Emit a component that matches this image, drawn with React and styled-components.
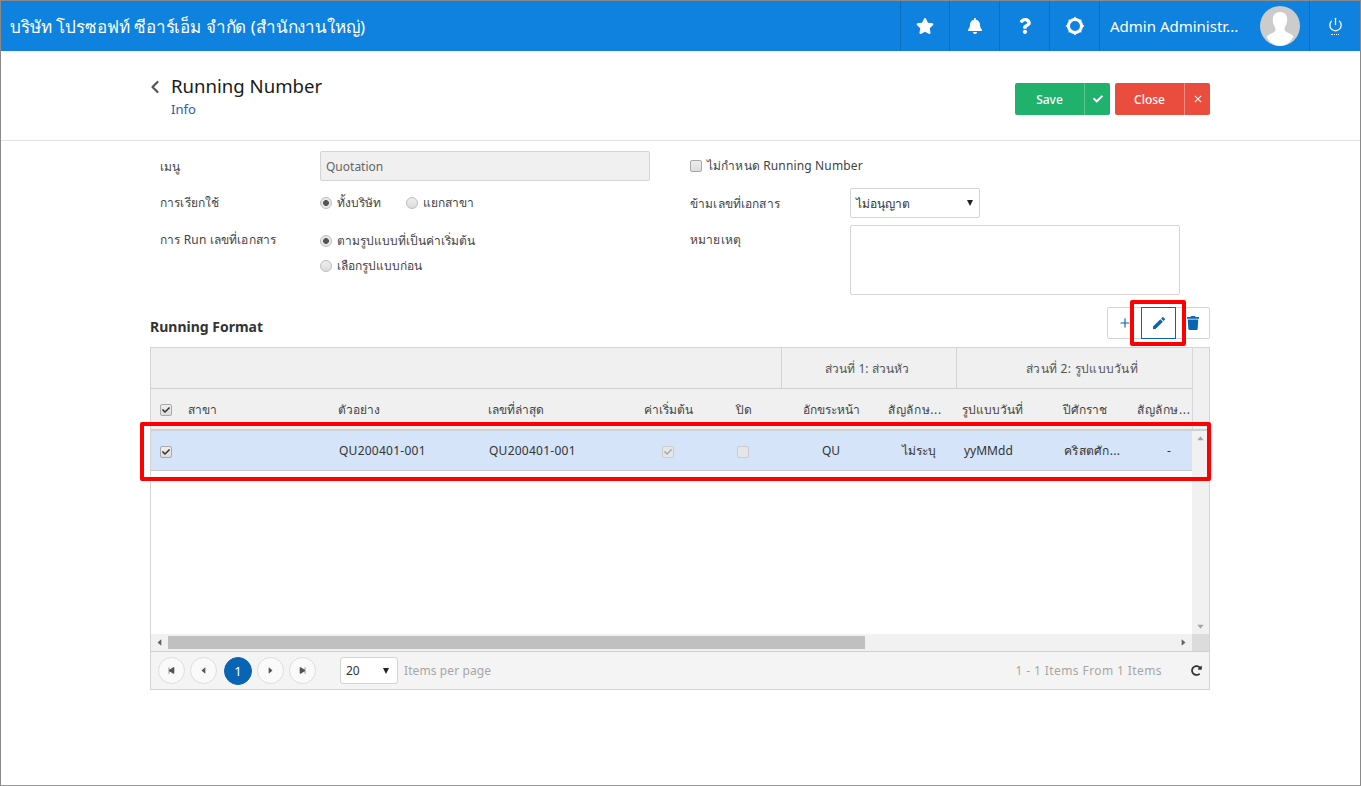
import React from "react";
import styled, { createGlobalStyle } from "styled-components";
import { FaStar, FaBell, FaQuestion, FaCheck, FaTrash, FaRedoAlt } from "react-icons/fa";
import { MdEdit, MdClose } from "react-icons/md";
import { FiPower, FiChevronLeft, FiPlus } from "react-icons/fi";
import { IoPlaySkipBack, IoPlaySkipForward, IoCaretBack, IoCaretForward, IoCaretUp, IoCaretDown } from "react-icons/io5";

const GlobalStyle = createGlobalStyle`
  html, body { margin: 0; padding: 0; background: #fff; }
  body {
    font-family: Tahoma, "Noto Sans", "DejaVu Sans", sans-serif;
    font-size: 12px;
    color: #333;
  }
  * { box-sizing: border-box; }
`;

const Page = styled.div`
  width: 1361px;
  height: 786px;
  border: 1px solid #8a8a8a;
  border-bottom: 1px solid #9a9a9a;
  overflow: hidden;
  position: relative;
`;
const TopBar = styled.header`
  height: 50px;
  background: #0e82de;
  color: #fff;
  display: flex;
  align-items: center;
`;
const Company = styled.div`
  flex: 1;
  padding-left: 9px;
  font-size: 17px;
  letter-spacing: -0.08px;
`;
const TopCell = styled.div`
  width: ${(p) => p.$w || 50}px;
  height: 50px;
  border-left: 1px solid #0b6fc0;
  display: flex;
  align-items: center;
  justify-content: center;
  font-size: ${(p) => p.$size || 18}px;
`;
const UserCell = styled.div`
  width: 210px;
  height: 50px;
  border-left: 1px solid #0b6fc0;
  display: flex;
  align-items: center;
  justify-content: space-between;
  padding: 0 9px 0 10px;
  font-size: 15px;
`;
const Avatar = styled.svg`
  width: 40px;
  height: 40px;
  border-radius: 50%;
  background: #ccc;
`;
const PowerWrap = styled.div`
  display: flex;
  flex-direction: column;
  align-items: center;
  line-height: 0;
`;
const PowerDots = styled.span`
  width: 8px;
  height: 1px;
  margin-top: 2px;
  border-top: 1px dotted #fff;
`;
const TitleBar = styled.div`
  height: 90px;
  border-bottom: 1px solid #e2e2e2;
  padding: 0 150px 0 149px;
  display: flex;
  justify-content: space-between;
`;
const TitleLeft = styled.div`
  display: flex;
  padding-top: 21px;
`;
const BackIcon = styled(FiChevronLeft)`
  flex: none;
  width: 20px;
  height: 20px;
  color: #555;
  stroke-width: 2.6;
  margin: 5px 6px 0 -5px;
`;
const TitleText = styled.div`
  font-size: 18.6px;
  line-height: 28px;
  color: #1a1a1a;
`;
const SubTitle = styled.div`
  font-size: 13px;
  line-height: 16px;
  margin-top: 1px;
  color: #2b5cb0;
`;
const Actions = styled.div`
  display: flex;
  gap: 5px;
  padding-top: 32px;
`;
const ActionBtn = styled.div`
  height: 32px;
  display: flex;
  color: #fff;
  border-radius: 2px;
  background: ${(p) => p.$bg};
  font-size: 12px;
  font-weight: 500;
`;
const ActionLabel = styled.span`
  width: 69px;
  display: flex;
  align-items: center;
  justify-content: center;
`;
const ActionIcon = styled.span`
  width: 26px;
  display: flex;
  align-items: center;
  justify-content: center;
  font-size: 10px;
  border-left: 1px solid ${(p) => p.$line};
`;
const Content = styled.div`
  width: 1060px;
  margin-left: 149px;
`;
const FormGrid = styled.div`
  display: grid;
  grid-template-columns: 526px 1fr;
  height: 166px;
`;
const FormCol = styled.div`
  display: flex;
  flex-direction: column;
`;
const Row = styled.div`
  display: flex;
  align-items: ${(p) => p.$top ? "flex-start" : "center"};
  margin-top: ${(p) => p.$mt || 0}px;
  padding-left: ${(p) => p.$pl || 0}px;
`;
const Label = styled.div`
  width: ${(p) => p.$w}px;
  flex: none;
  color: #444;
  line-height: 13px;
  letter-spacing: 0.15px;
  padding-top: ${(p) => p.$pt || 0}px;
`;
const CheckLabel = styled(Label)`
  margin-left: 5px;
`;
const ReadInput = styled.div`
  width: 330px;
  height: 30px;
  background: #f0f0f0;
  border: 1px solid #d4d4d4;
  border-radius: 2px;
  padding: 0 5px;
  display: flex;
  align-items: center;
  color: #666;
`;
const RadioGroup = styled.div`
  display: flex;
  flex-direction: column;
  gap: 10px;
`;
const RadioLine = styled.div`
  display: flex;
  align-items: center;
  gap: ${(p) => p.$gap || 0}px;
  height: 15px;
`;
const Radio = styled.label`
  display: flex;
  align-items: center;
  gap: 5px;
  color: #444;
`;
const RadioDot = styled.span`
  width: 12px;
  height: 12px;
  border-radius: 50%;
  border: 1px solid #bdbdbd;
  background: ${(p) => p.$on ? "radial-gradient(circle, #555 0 2.6px, #e8e8e8 3.2px)" : "linear-gradient(#eee, #dcdcdc)"};
`;
const Box = styled.span`
  width: 12px;
  height: 12px;
  flex: none;
  margin-left: ${(p) => p.$ml || 0}px;
  border-radius: 2px;
  border: 1px solid ${(p) => p.$faded ? "#ccc" : "#a9a9a9"};
  background: ${(p) => p.$faded ? "#e4e6ea" : "linear-gradient(#eee, #ddd)"};
  color: ${(p) => p.$faded ? "#a9a9a9" : "#333"};
  font-size: 8px;
  display: inline-flex;
  align-items: center;
  justify-content: center;
  vertical-align: middle;
`;
const Select = styled.div`
  width: 130px;
  height: 30px;
  border: 1px solid #d4d4d4;
  border-radius: 2px;
  padding: 0 5px;
  display: flex;
  align-items: center;
  justify-content: space-between;
  color: #333;
  font-weight: 500;
`;
const Arrow = styled.span`
  width: 0;
  height: 0;
  margin-right: 1px;
  border-left: 3.5px solid transparent;
  border-right: 3.5px solid transparent;
  border-top: 6px solid #222;
`;
const SizeArrow = styled(Arrow)`
  margin-right: 3px;
`;
const TextArea = styled.div`
  width: 330px;
  height: 70px;
  border: 1px solid #d4d4d4;
  border-radius: 2px;
`;
const FormatBar = styled.div`
  height: 40px;
  display: flex;
  align-items: flex-start;
  justify-content: space-between;
`;
const FormatTitle = styled.div`
  font-size: 14px;
  line-height: 40px;
  font-weight: 700;
  color: #333;
`;
const ToolGroup = styled.div`
  display: flex;
  width: 103px;
  height: 32px;
  border: 1px solid #d4d4d4;
  border-radius: 2px;
  color: #0a64b4;
`;
const ToolBtn = styled.div`
  flex: ${(p) => p.$w ? `0 0 ${p.$w}px` : 1};
  display: flex;
  align-items: center;
  justify-content: center;
  font-size: ${(p) => p.$size || 14}px;
  ${(p) => p.$active && "border: 1px solid #0a64b4; height: 32px; margin-top: -1px;"}
`;
const Grid = styled.div`
  width: 1060px;
  height: 343px;
  border: 1px solid #d4d4d4;
  display: flex;
  flex-direction: column;
`;
const HeadWrap = styled.div`
  display: flex;
  flex: none;
  height: 83px;
  background: #f0f0f0;
  border-bottom: 2px solid #d0d0d0;
`;
const HeadMain = styled.div`
  width: 1041px;
  overflow: hidden;
`;
const HeadGap = styled.div`
  flex: 1;
  border-left: 1px solid #d8d8d8;
`;
const GroupRow = styled.div`
  height: 41px;
  display: flex;
  border-bottom: 1px solid #d0d0d0;
`;
const GroupCell = styled.div`
  width: ${(p) => p.$w}px;
  flex: none;
  display: flex;
  align-items: center;
  justify-content: center;
  color: #555;
  padding: 0 ${(p) => p.$pr || 0}px 0 ${(p) => p.$pl || 0}px;
  letter-spacing: ${(p) => p.$ls || 0}px;
  ${(p) => p.$line && "border-left: 1px solid #d4d4d4;"}
`;
const Cols = styled.div`
  display: flex;
  height: ${(p) => p.$h}px;
  align-items: center;
`;
const Col = styled.div`
  width: ${(p) => p.$w}px;
  flex: none;
  padding: ${(p) => p.$pad || "0"};
  text-align: ${(p) => p.$align || "left"};
  white-space: nowrap;
  overflow: hidden;
  letter-spacing: ${(p) => p.$ls || 0}px;
  color: ${(p) => p.$color || "#333"};
`;
const BodyWrap = styled.div`
  height: 203px;
  flex: none;
  display: flex;
`;
const BodyMain = styled.div`
  width: 1041px;
`;
const DataRow = styled.div`
  background: #d5e4f9;
  border-bottom: 1px solid #c8c8c8;
`;
const VScroll = styled.div`
  flex: 1;
  background: #f1f1f1;
  display: flex;
  flex-direction: column;
  justify-content: space-between;
  align-items: center;
  color: #a3a3a3;
  font-size: 9px;
  padding: 3px 0;
`;
const HScroll = styled.div`
  height: 18px;
  flex: none;
  display: flex;
  align-items: center;
  background: #f1f1f1;
  border-bottom: 1px solid #d0d0d0;
  color: #666;
  font-size: 9px;
`;
const HArrow = styled.span`
  width: 17px;
  display: flex;
  justify-content: center;
`;
const HThumb = styled.div`
  width: 697px;
  height: 13px;
  background: #c0c0c0;
`;
const HRest = styled.div`
  flex: 1;
`;
const Corner = styled.div`
  width: 17px;
  height: 17px;
  background: #dcdcdc;
`;
const Footer = styled.div`
  flex: 1;
  background: #f4f4f4;
  display: flex;
  align-items: center;
  padding: 0 7px;
  gap: 5px;
`;
const Pager = styled.span`
  width: 27px;
  height: 27px;
  border-radius: 50%;
  display: flex;
  align-items: center;
  justify-content: center;
  font-size: 9px;
  border: 1px solid #ddd;
  background: #fafafa;
  color: #555;
`;
const ActivePager = styled(Pager)`
  width: 28px;
  height: 28px;
  margin-left: 2px;
  font-size: 13px;
  border-color: #0a64b4;
  background: #0a64b4;
  color: #fff;
`;
const PageSize = styled.div`
  width: 58px;
  height: 27px;
  margin-left: 19px;
  margin-right: 1px;
  background: #fff;
  border: 1px solid #d4d4d4;
  border-radius: 3px;
  padding: 0 5px;
  display: flex;
  align-items: center;
  justify-content: space-between;
`;
const FootText = styled.span`
  color: #a6a6a6;
  letter-spacing: ${(p) => p.$ls || 0}px;
`;
const FootRight = styled.div`
  margin-left: auto;
  display: flex;
  align-items: center;
  gap: 29px;
`;
const Refresh = styled(FaRedoAlt)`
  font-size: 11px;
  color: #333;
`;
const Mark = styled.div`
  position: absolute;
  left: ${(p) => p.$x}px;
  top: ${(p) => p.$y}px;
  width: ${(p) => p.$w}px;
  height: ${(p) => p.$h}px;
  border: 4px solid #f00;
  border-radius: 2px;
`;

const columns = [
  { w: 30 },
  { w: 150, pad: "0 0 0 7px", head: "สาขา" },
  { w: 150, pad: "0 0 0 7px", head: "ตัวอย่าง", cell: "QU200401-001", cellPad: "0 0 0 8px", cellLs: 0.25 },
  { w: 150, pad: "0 0 0 7px", head: "เลขที่ล่าสุด", cell: "QU200401-001", cellPad: "0 0 0 8px", cellLs: 0.25 },
  { w: 75, align: "center", head: "ค่าเริ่มต้น" },
  { w: 75, align: "center", head: "ปิด" },
  { w: 100, align: "center", head: "อักขระหน้า", cell: "QU" },
  { w: 75, align: "center", pad: "0 7px 0 0", head: "สัญลักษ...", headLs: 0.6, cell: "ไม่ระบุ", cellPad: "0" },
  { w: 100, pad: "0 0 0 6px", head: "รูปแบบวันที่", cell: "yyMMdd", cellPad: "0 0 0 8px" },
  { w: 75, pad: "0 0 0 7px", head: "ปีศักราช", cell: "คริสตศัก...", cellPad: "0 0 0 8px", cellLs: 0.3 },
  { w: 61, pad: "0 0 0 6px", head: "สัญลักษ...", headLs: 0.6, cell: "-", cellPad: "0 0 0 36px" },
];

const Gear = () => (
  <svg width="20" height="20" viewBox="0 0 20 20">
    <circle cx="10" cy="10" r="6.5" fill="none" stroke="#fff" strokeWidth="3" />
    <path fill="#fff" d="M10 .6l2 2.400H8zM10 19.400l2-2.400H8zM.6 10l2.400-2v4zM19.400 10l-2.400-2v4zM3.400 3.400l3 .7-2.300 2.300zM16.600 3.400l-3 .7 2.300 2.300zM3.400 16.600l3-.7-2.300-2.300zM16.600 16.600l-3-.7 2.300-2.300z" />
  </svg>
);

const App = () => {
  return (
    <>
      <GlobalStyle />
      <Page>
        <TopBar>
          <Company>บริษัท โปรซอฟท์ ซีอาร์เอ็ม จำกัด (สำนักงานใหญ่)</Company>
          <TopCell $w={49}><FaStar /></TopCell>
          <TopCell><FaBell size={16} /></TopCell>
          <TopCell><FaQuestion size={16} /></TopCell>
          <TopCell><Gear /></TopCell>
          <UserCell>
            <span>Admin Administr...</span>
            <Avatar viewBox="0 0 40 40">
              <path fill="#fff" d="M20 6c-5 0-7.500 3.500-7.200 8.500.2 3 1 5 2 6.500.8 1.300.9 3 .2 4.200-1.500 2-6.500 3-8.500 5.500C8.500 34.500 13 40 20 40s11.500-5.500 13.500-9.800c-2-2.500-7-3.500-8.500-5.500-.7-1.200-.6-2.900.2-4.200 1-1.500 1.800-3.500 2-6.500C27.500 9.500 25 6 20 6z" />
            </Avatar>
          </UserCell>
          <TopCell $w={51}>
            <PowerWrap>
              <FiPower size={15} />
              <PowerDots />
            </PowerWrap>
          </TopCell>
        </TopBar>

        <TitleBar>
          <TitleLeft>
            <BackIcon />
            <div>
              <TitleText>Running Number</TitleText>
              <SubTitle>Info</SubTitle>
            </div>
          </TitleLeft>
          <Actions>
            <ActionBtn $bg="#20b16c">
              <ActionLabel>Save</ActionLabel>
              <ActionIcon $line="#5cc893"><FaCheck /></ActionIcon>
            </ActionBtn>
            <ActionBtn $bg="#ea4c3e">
              <ActionLabel>Close</ActionLabel>
              <ActionIcon $line="#f08a80"><MdClose size={12} /></ActionIcon>
            </ActionBtn>
          </Actions>
        </TitleBar>

        <Content>
          <FormGrid>
            <FormCol>
              <Row $pl={10} $mt={10}>
                <Label $w={160}>เมนู</Label>
                <ReadInput>Quotation</ReadInput>
              </Row>
              <Row $pl={10} $mt={14}>
                <Label $w={160}>การเรียกใช้</Label>
                <RadioLine $gap={25}>
                  <Radio><RadioDot $on />ทั้งบริษัท</Radio>
                  <Radio><RadioDot />แยกสาขา</Radio>
                </RadioLine>
              </Row>
              <Row $pl={10} $mt={23} $top>
                <Label $w={160}>การ Run เลขที่เอกสาร</Label>
                <RadioGroup>
                  <RadioLine><Radio><RadioDot $on />ตามรูปแบบที่เป็นค่าเริ่มต้น</Radio></RadioLine>
                  <RadioLine><Radio><RadioDot />เลือกรูปแบบก่อน</Radio></RadioLine>
                </RadioGroup>
              </Row>
            </FormCol>
            <FormCol>
              <Row $mt={18} $pl={14}>
                <Box />
                <CheckLabel $w={300}>ไม่กำหนด Running Number</CheckLabel>
              </Row>
              <Row $mt={16} $pl={14}>
                <Label $w={160}>ข้ามเลขที่เอกสาร</Label>
                <Select>ไม่อนุญาต<Arrow /></Select>
              </Row>
              <Row $mt={7} $pl={14} $top>
                <Label $w={160} $pt={8}>หมายเหตุ</Label>
                <TextArea />
              </Row>
            </FormCol>
          </FormGrid>

          <FormatBar>
            <FormatTitle>Running Format</FormatTitle>
            <ToolGroup>
              <ToolBtn $w={33} $size={14}><FiPlus /></ToolBtn>
              <ToolBtn $w={35} $active $size={16}><MdEdit /></ToolBtn>
              <ToolBtn><FaTrash /></ToolBtn>
            </ToolGroup>
          </FormatBar>

          <Grid>
            <HeadWrap>
              <HeadMain>
                <GroupRow>
                  <GroupCell $w={630} />
                  <GroupCell $w={175} $line $pr={4}>ส่วนที่ 1: ส่วนหัว</GroupCell>
                  <GroupCell $w={236} $line $pl={15} $ls={0.3}>ส่วนที่ 2: รูปแบบวันที่</GroupCell>
                </GroupRow>
                <Cols $h={40}>
                  {columns.map((c, i) => (
                    <Col key={i} $w={c.w} $pad={c.pad} $align={c.align} $ls={c.headLs} $color="#444">
                      {i === 0 ? <Box $ml={9}><FaCheck /></Box> : c.head}
                    </Col>
                  ))}
                </Cols>
              </HeadMain>
              <HeadGap />
            </HeadWrap>
            <BodyWrap>
              <BodyMain>
                <DataRow>
                  <Cols $h={39}>
                    {columns.map((c, i) => (
                      <Col key={i} $w={c.w} $pad={c.cellPad || c.pad} $align={c.align} $ls={c.cellLs}>
                        {i === 0 && <Box $ml={9}><FaCheck /></Box>}
                        {i === 4 && <Box $faded $ml={-2}><FaCheck /></Box>}
                        {i === 5 && <Box $faded $ml={-2} />}
                        {c.cell}
                      </Col>
                    ))}
                  </Cols>
                </DataRow>
              </BodyMain>
              <VScroll>
                <IoCaretUp />
                <IoCaretDown />
              </VScroll>
            </BodyWrap>
            <HScroll>
              <HArrow><IoCaretBack /></HArrow>
              <HThumb />
              <HRest />
              <HArrow><IoCaretForward /></HArrow>
              <Corner />
            </HScroll>
            <Footer>
              <Pager><IoPlaySkipBack /></Pager>
              <Pager><IoCaretBack /></Pager>
              <ActivePager>1</ActivePager>
              <Pager><IoCaretForward /></Pager>
              <Pager><IoPlaySkipForward /></Pager>
              <PageSize>20<SizeArrow /></PageSize>
              <FootText $ls={0.1}>Items per page</FootText>
              <FootRight>
                <FootText $ls={0.4}>1 - 1 Items From 1 Items</FootText>
                <Refresh />
              </FootRight>
            </Footer>
          </Grid>
        </Content>

        <Mark $x={1129} $y={299} $w={56} $h={46} />
        <Mark $x={139} $y={421} $w={1071} $h={59} />
      </Page>
    </>
  );
};

export default App;
